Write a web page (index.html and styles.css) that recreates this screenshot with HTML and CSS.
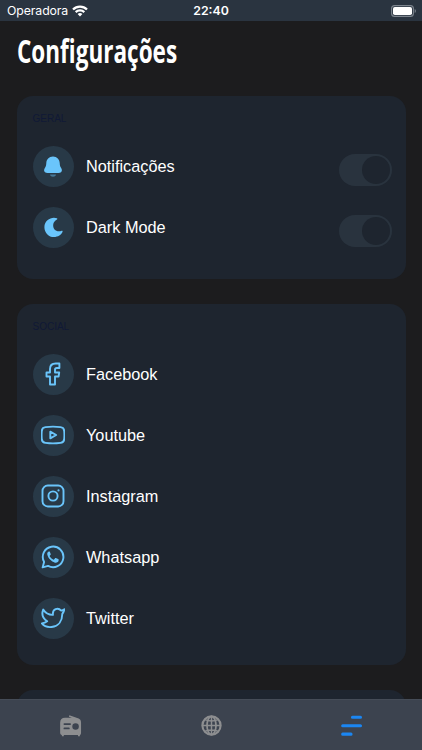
FILE: index.html
```html
<!DOCTYPE html>
<html lang="pt-BR">
<head>
  <meta charset="UTF-8" />
  <meta name="viewport" content="width=device-width, initial-scale=1.0" />
  <title>Configurações</title>
  <link rel="stylesheet" href="styles.css">
</head>
<body>
  <header class="status-bar">
    <div class="carrier">
      <span>Operadora</span>
      <svg class="wifi" viewBox="0 0 16 12" fill="none" stroke="#fff" stroke-width="2.3">
        <path d="M1 4.5a10 10 0 0 1 14 0M3.7 7.2a6.2 6.2 0 0 1 8.6 0" />
        <path d="M5.6 9.1a3.5 3.5 0 0 1 4.8 0L8 11.6z" fill="#fff" stroke="none" />
      </svg>
    </div>
    <span class="clock">22:40</span>
    <svg class="battery" viewBox="0 0 26 12">
      <rect x=".6" y=".6" width="21.8" height="10.8" rx="3" fill="none" stroke="#7d858e" stroke-width="1.1" />
      <rect x="2" y="2" width="19" height="8" rx="1.8" fill="#fff" />
      <path d="M23.7 4v4c1.6-.5 1.6-3.5 0-4z" fill="#7d858e" />
    </svg>
  </header>

  <main class="content">
    <h1>Configurações</h1>

    <section class="card general">
      <h2>GERAL</h2>
      <div class="row">
        <span class="icon">
          <svg viewBox="0 0 24 24" fill="#6ac5fb">
            <path d="M12 1.500C8 1.500 5.400 4.500 5.300 8c-.1 2.200-.4 3.300-1.300 4.800-1.100 1.700-1.300 3.300 0 4.400.7.600 1.500.8 2.500.8h11c1 0 1.800-.2 2.500-.8 1.300-1.100 1.100-2.700 0-4.400-.9-1.500-1.200-2.600-1.300-4.800-.1-3.500-2.700-6.500-6.700-6.500z" />
            <path d="M9 19.500h6c-.3 3-5.700 3-6 0z" opacity=".45" />
          </svg>
        </span>
        <span class="name">Notificações</span>
        <span class="switch"></span>
      </div>
      <div class="row">
        <span class="icon">
          <svg viewBox="0 0 24 24" fill="#6ac5fb">
            <path d="M15.900 2.300C11 .3 3.400 3.800 3.400 11.200c0 5.500 4.300 9.900 9.500 9.900 4 0 7.700-2.200 8.700-5.500.2-.7-.3-1.100-.9-.8-4.900 1.900-9-1.300-8.500-6 .2-2.300 1.700-4.100 3.700-5.200.6-.3.600-1 0-1.300z" />
          </svg>
        </span>
        <span class="name">Dark Mode</span>
        <span class="switch"></span>
      </div>
    </section>

    <section class="card">
      <h2>SOCIAL</h2>
      <div class="row">
        <span class="icon">
          <svg class="line" viewBox="0 0 24 24">
            <path d="M9 22.500h5v-8h3.600l.6-4h-4.200V7.700c0-1.200.6-1.700 1.800-1.700h2.600V1.500h-3.700C10.900 1.500 9 3.600 9 7v3.500H5.500v4H9z" />
          </svg>
        </span>
        <span class="name">Facebook</span>
      </div>
      <div class="row">
        <span class="icon">
          <svg class="line" viewBox="0 0 24 24">
            <path d="M4.500 4.100Q12 3.100 19.500 4.100C22 4.400 23 5.500 23.200 7.800q.4 4.200 0 8.400c-.2 2.300-1.200 3.400-3.700 3.700q-7.500 1-15 0C2 19.600 1 18.500.8 16.200q-.4-4.200 0-8.400C1 5.500 2 4.400 4.500 4.100z" />
            <path d="M9.300 8.700v6.600l5.900-3.300z" />
          </svg>
        </span>
        <span class="name">Youtube</span>
      </div>
      <div class="row">
        <span class="icon">
          <svg class="line" viewBox="0 0 24 24">
            <rect x="1.500" y="1.500" width="21" height="21" rx="5.300" />
            <circle cx="12" cy="12" r="4.600" />
            <circle cx="17.500" cy="6.400" r="1.100" fill="#6ac5fb" stroke="none" />
          </svg>
        </span>
        <span class="name">Instagram</span>
      </div>
      <div class="row">
        <span class="icon">
          <svg class="line" viewBox="0 0 24 24">
            <path d="M1.600 22.400l1.500-5.500a10.300 10.300 0 1 1 4 4z" />
            <path d="M8.200 6.400c-1.500.2-2.200 1.600-1.900 3.200.8 3.600 4.100 7.100 7.700 8.100 1.900.4 3.700-.8 3.700-2.700 0-.5-.2-.7-.6-.9l-2.300-1c-.4-.2-.7 0-.9.300l-.9 1c-.2.300-.6.300-.9.200-1.400-.7-2.500-1.800-3.300-3.200-.1-.3-.1-.6.1-.8l.7-.9c.2-.3.200-.5.100-.8l-.9-2.100c-.1-.3-.3-.4-.6-.4z" fill="#6ac5fb" stroke="none" />
          </svg>
        </span>
        <span class="name">Whatsapp</span>
      </div>
      <div class="row">
        <span class="icon">
          <svg class="line" viewBox="0 0 24 24">
            <path d="M23.400 3.300c-1 .7-2.100 1.100-3.200 1.300-3.400-3.700-8.500-1.300-8.300 3.300v1C8 9 4.500 7.200 2.200 3.600c-1.800 4.700-.2 9 4 11.600-1.700 1.300-3.500 1.900-5.300 2.200 2 2.700 6 4 9.700 3.600 7.200-.7 10.600-6.400 10.700-13.100.9-1.100 1.700-2.700 2.100-4.600z" />
          </svg>
        </span>
        <span class="name">Twitter</span>
      </div>
    </section>

    <section class="card"></section>
  </main>

  <nav class="tab-bar">
    <a class="tab">
      <svg viewBox="0 0 24 24">
        <path d="M10.800 1.200l9.700 3.600C22.300 5.600 23 7 23 9v10.500c0 1.300-.4 2-1.200 2.400v1.300h-2V22H5v1.200H3v-1.300C1.800 21.500 1.200 20.700 1.200 19.500V9c0-3.300 1.900-5 5-5h7.300l-3.100-1.100z" fill="#8d8e90" />
        <path d="M5.600 10.500h6M5.600 15h4.700" fill="none" stroke="#3c434f" stroke-width="1.800" stroke-linecap="round" />
        <circle cx="17.300" cy="13" r="3.400" fill="#3c434f" />
      </svg>
    </a>
    <a class="tab">
      <svg viewBox="0 0 24 24" fill="none" stroke="#8d8e90" stroke-width="2.200">
        <circle cx="12" cy="12" r="9.500" />
        <ellipse cx="12" cy="12" rx="4.700" ry="9.500" stroke-width="1.800" />
        <path d="M12 2v20M2 12h20M5 5.800q7 3 14 0M5 18.200q7-3 14 0" stroke-width="1.500" />
      </svg>
    </a>
    <a class="tab">
      <svg viewBox="0 0 24 24" stroke="#1b86f2" stroke-width="3.200" stroke-linecap="round">
        <path d="M13 3.300h8.400M2.800 12.300h18.600M2.800 21h8.700" />
      </svg>
    </a>
  </nav>
</body>
</html>
```
FILE: styles.css
```css
* {
  box-sizing: border-box;
}

body {
  margin: 0;
  height: 100vh;
  display: flex;
  flex-direction: column;
  overflow: hidden;
  background: #1c1c1e;
  color: #fff;
  font-family: 'Liberation Sans', sans-serif;
}

.status-bar {
  height: 21px;
  flex: none;
  padding: 0 5px 0 7px;
  display: grid;
  grid-template-columns: 1fr auto 1fr;
  align-items: center;
  background: #2a3440;
  font-family: Inter, sans-serif;
  font-size: 12.3px;
}

.carrier {
  display: flex;
  align-items: center;
  gap: 4px;
  letter-spacing: -0.1px;
}

.wifi {
  width: 16px;
  height: 12px;
}

.clock {
  margin-left: -2px;
  font-weight: 600;
}

.battery {
  width: 26px;
  height: 12px;
  justify-self: end;
}

.content {
  flex: 1;
  min-height: 0;
  overflow: hidden;
  padding: 0 16px 0 16.5px;
}

h1 {
  width: max-content;
  height: 75px;
  margin: 0;
  font-family: 'Open Sans', sans-serif;
  font-size: 32px;
  font-weight: 700;
  line-height: 60px;
  transform: scaleX(0.704);
  transform-origin: left;
}

.card {
  height: 361.4px;
  margin-bottom: 25px;
  padding: 16px;
  border-radius: 16px;
  background: #1e252f;
}

.general {
  height: 182.6px;
}

h2 {
  height: 14px;
  margin: 0 0 20px;
  color: #101936;
  font-size: 10px;
  font-weight: 400;
  line-height: 13px;
}

.row {
  display: flex;
  align-items: center;
  height: 41px;
  margin-bottom: 20px;
}

.icon {
  display: flex;
  align-items: center;
  justify-content: center;
  width: 41px;
  height: 41px;
  border-radius: 50%;
  background: #283947;
}

.icon svg {
  width: 24px;
  height: 24px;
}

.line {
  fill: none;
  stroke: #6ac5fb;
  stroke-width: 1.9;
  stroke-linecap: round;
  stroke-linejoin: round;
}

.name {
  margin-left: 12.5px;
  font-size: 16.3px;
}

.switch {
  width: 53px;
  height: 32px;
  margin: 6px -1.5px 0 auto;
  padding: 2px;
  border-radius: 16px;
  background: #29333e;
}

.switch::after {
  content: '';
  display: block;
  width: 28px;
  height: 28px;
  margin-left: auto;
  border-radius: 50%;
  background: #1e252f;
}

.tab-bar {
  display: flex;
  flex: none;
  height: 51px;
  border-top: 1px solid #454c57;
  background: #3c434f;
}

.tab {
  flex: 1;
  display: flex;
  align-items: center;
  justify-content: center;
}

.tab svg {
  width: 23px;
  height: 23px;
}
```
